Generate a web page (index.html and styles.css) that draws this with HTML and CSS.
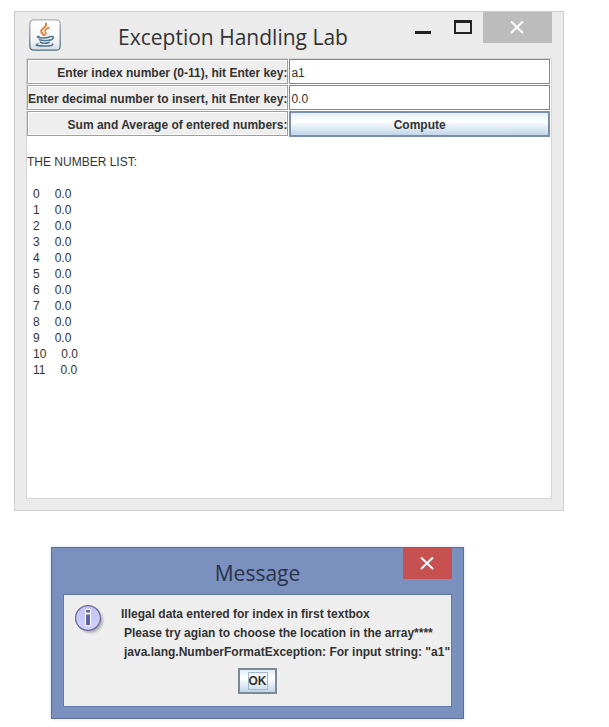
FILE: index.html
```html
<!DOCTYPE html>
<html lang="en">
<head>
<meta charset="utf-8">
<title>Exception Handling Lab</title>
<link rel="stylesheet" href="styles.css">
</head>
<body>
<main class="window">
  <header class="titlebar">
    <svg class="app-icon" viewBox="0 0 32 32" aria-hidden="true">
      <defs>
        <linearGradient id="tile" x1="0" y1="0" x2="0" y2="1">
          <stop offset="0" stop-color="#fff"/><stop offset=".6" stop-color="#f8f9fa"/><stop offset="1" stop-color="#d3dde5"/>
        </linearGradient>
        <linearGradient id="rim" x1="0" y1="0" x2="0" y2="1">
          <stop offset="0" stop-color="#a9b0b5"/><stop offset="1" stop-color="#577083"/>
        </linearGradient>
      </defs>
      <rect x=".8" y=".8" width="30.4" height="30.4" rx="4" fill="url(#tile)" stroke="url(#rim)" stroke-width="1.3"/>
      <g fill="none" stroke-linecap="round">
        <path d="M17 4.500c1.500 3.500-5 5-4.800 8 .2 1.500 2 2.400 2.600 3.600" stroke="#e5803a" stroke-width="2"/>
        <path d="M20 8.500c-3 1.200-4.600 2.600-3.600 4.200.8 1.200.6 2.300-.5 3.300" stroke="#e5803a" stroke-width="1.600"/>
        <path d="M10 17.300c-3.500 1-.5 1.600 4 1.600 3.500 0 5.500-.4 7-1.100M22 17.500c3.800-.6 3 2.800-1.500 4" stroke="#52758f" stroke-width="1.500"/>
        <path d="M10.500 20.800c2 1 7.500.9 10 .2M11.500 23.200c1.800 1.100 6 1 8.500.2" stroke="#52758f" stroke-width="1.600"/>
        <path d="M9 25c-4.500 1.300.5 2 6 2 6 0 10-.8 8.500-2" stroke="#52758f" stroke-width="1.500"/>
      </g>
    </svg>
    <h1 class="title">Exception Handling Lab</h1>
    <button class="control" type="button" aria-label="Minimize"><svg viewBox="0 0 39 31"><path d="M10 20.500h16" stroke="#222" stroke-width="3"/></svg></button>
    <button class="control" type="button" aria-label="Maximize"><svg viewBox="0 0 39 31"><path d="M11 9.500h16v11.500h-16z" fill="none" stroke="#222" stroke-width="2"/><path d="M10 9.500h18" stroke="#222" stroke-width="3"/></svg></button>
    <button class="control close-main" type="button" aria-label="Close"><svg viewBox="0 0 69 31"><path d="M28 9.500l12 11.500M40 9.500l-12 11.500" stroke="#fff" stroke-width="2"/></svg></button>
  </header>
  <div class="content">
    <form class="fields">
      <label class="cell" for="index">Enter index number (0-11), hit Enter key:</label>
      <input class="text" id="index" type="text" value="a1">
      <label class="cell" for="decimal">Enter decimal number to insert, hit Enter key:</label>
      <input class="text" id="decimal" type="text" value="0.0">
      <label class="cell" for="compute">Sum and Average of entered numbers:</label>
      <button class="compute" id="compute" type="button">Compute</button>
    </form>
    <section class="output">
      <h2 class="list-title">THE NUMBER LIST:</h2>
      <ul class="list">
        <li><span>0</span><span>0.0</span></li>
        <li><span>1</span><span>0.0</span></li>
        <li><span>2</span><span>0.0</span></li>
        <li><span>3</span><span>0.0</span></li>
        <li><span>4</span><span>0.0</span></li>
        <li><span>5</span><span>0.0</span></li>
        <li><span>6</span><span>0.0</span></li>
        <li><span>7</span><span>0.0</span></li>
        <li><span>8</span><span>0.0</span></li>
        <li><span>9</span><span>0.0</span></li>
        <li><span>10</span><span>0.0</span></li>
        <li><span>11</span><span>0.0</span></li>
      </ul>
    </section>
  </div>
</main>
<section class="dialog" role="dialog" aria-labelledby="dialog-title">
  <header class="titlebar">
    <h2 class="title" id="dialog-title">Message</h2>
    <button class="control close-dialog" type="button" aria-label="Close"><svg viewBox="0 0 49 31"><path d="M18 9.500l12 11.500M30 9.500l-12 11.500" stroke="#fff" stroke-width="2"/></svg></button>
  </header>
  <div class="dialog-body">
    <div class="message">
      <svg class="info" viewBox="0 0 32 32" aria-hidden="true">
        <defs>
          <linearGradient id="ball" x1="0" y1="0" x2="0" y2="1">
            <stop offset="0" stop-color="#c2c2f4"/><stop offset="1" stop-color="#d2d2ff"/>
          </linearGradient>
          <filter id="soft" x="-20%" y="-20%" width="150%" height="150%"><feGaussianBlur stdDeviation="1.200"/></filter>
        </defs>
        <circle cx="15.500" cy="15.500" r="12.500" fill="#999" opacity=".7" filter="url(#soft)"/>
        <circle cx="13" cy="13" r="12.400" fill="url(#ball)" stroke="#66669a" stroke-width="1.200"/>
        <path d="M10.500 4.500h5v3.500h-5zM10.500 9h5v11.500h-5z" fill="#62629c" stroke="#fff"/>
      </svg>
      <div class="lines">
        <p>Illegal data entered for index in first textbox</p>
        <p class="indent">Please try agian to choose the location in the array****</p>
        <p class="indent">java.lang.NumberFormatException: For input string: "a1"</p>
      </div>
    </div>
    <button class="ok" type="button"><span>OK</span></button>
  </div>
</section>
</body>
</html>
```
FILE: styles.css
```css
* {
  box-sizing: border-box;
}

body {
  margin: 0;
  padding: 11px 45px 8px 14px;
  background: #fff;
  color: #333;
  font: 12px/16px "Liberation Sans", Arial, sans-serif;
}

h1, h2, p, ul {
  margin: 0;
  padding: 0;
  font: inherit;
}

.window {
  padding: 0 11px 11px;
  border: 1px solid #cdcdcd;
  background: #ebebeb;
}

.titlebar {
  display: flex;
  height: 46px;
}

.app-icon {
  flex: none;
  width: 32px;
  height: 32px;
  margin: 7px 0 0 3px;
}

.title {
  flex: 1;
  padding-top: 9px;
  color: #333;
  font: 21px/32px "Open Sans", "Noto Sans", sans-serif;
  text-align: center;
}

.control {
  width: 39px;
  height: 31px;
  padding: 0;
  border: 0;
  background: none;
}

.control svg {
  display: block;
  width: 100%;
  height: 100%;
}

.close-main {
  width: 69px;
  background: #bcbcbc;
}

.close-dialog {
  width: 49px;
  background: #c75050;
}

.content {
  min-height: 441px;
  border: 1px solid #d6d6d6;
  background: #fff;
}

.fields {
  display: grid;
  grid-template-columns: 1fr 1fr;
  grid-auto-rows: 25px;
  gap: 1px;
  padding-right: 1px;
}

.cell {
  padding-top: 1px;
  border: 1px solid #9a9fa3;
  box-shadow: inset 1px 1px #fff, inset -1px -1px #fff;
  background: #eee;
  font-weight: bold;
  line-height: 25px;
  text-align: right;
  white-space: nowrap;
}

.text {
  width: 100%;
  height: 25px;
  padding: 2px 1px 0;
  border: 1px solid #7a8a99;
  background: #fff;
  color: #333;
  font: inherit;
}

.compute,
.ok {
  padding: 0;
  border: 2px solid #7a8a99;
  background: linear-gradient(#dde8f3, #fff 40%, #b8cfe5) border-box;
  color: #333;
  font: bold 12px/16px "Liberation Sans", Arial, sans-serif;
}

.compute {
  height: 26px;
  padding-top: 2px;
  border-color: #7a8fae;
}

.output {
  padding-top: 18px;
}

.list {
  padding: 16px 0 0 6px;
  list-style: none;
}

.list li {
  display: flex;
  gap: 15px;
}

.dialog {
  margin: 36px 55px 0 37px;
  margin-right: 100px;
  padding: 0 11px 11px;
  border: 1px solid #5d6e92;
  background: #7a90be;
  box-shadow: 0 0 3px #d5dcee;
}

.dialog .title {
  padding-left: 49px;
  color: #2a344a;
}

.dialog-body {
  display: flex;
  flex-direction: column;
  align-items: center;
  padding: 10px 10px 12px;
  border: 1px solid #6478a5;
  background: #eee;
}

.message {
  display: flex;
  gap: 14px;
  align-self: stretch;
}

.info {
  flex: none;
  width: 32px;
  height: 32px;
  margin-left: 1px;
}

.lines {
  font-weight: bold;
  line-height: 19px;
  white-space: nowrap;
}

.indent {
  padding-left: 3px;
}

.ok {
  width: 39px;
  height: 26px;
  margin-top: 6px;
}

.ok span {
  display: inline-block;
  border: 1px solid #a3b8cc;
}
```
